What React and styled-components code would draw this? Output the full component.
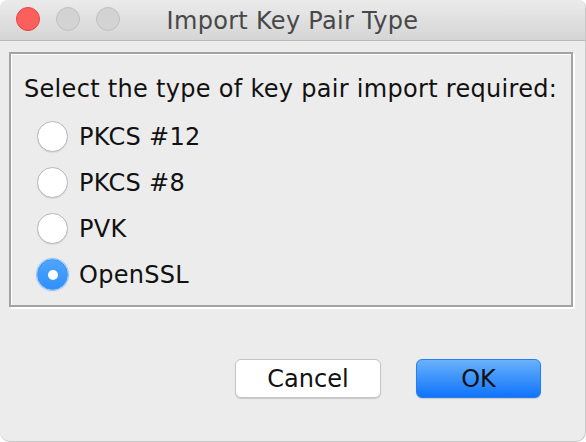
import React, { useState } from "react";
import styled, { createGlobalStyle } from "styled-components";

const GlobalStyle = createGlobalStyle`
  html, body {
    margin: 0;
    padding: 0;
    background: #ffffff;
  }
  * {
    box-sizing: border-box;
  }
`;

const options = ["PKCS #12", "PKCS #8", "PVK", "OpenSSL"];

function App() {
  const [selected, setSelected] = useState("OpenSSL");

  return (
    <>
      <GlobalStyle />
      <Window>
        <TitleBar>
          <Lights>
            <Light color="#fc605c" edge="#df4744" />
            <Light color="#d3d3d3" edge="#bfbfbf" />
            <Light color="#d3d3d3" edge="#bfbfbf" />
          </Lights>
          <Title>Import Key Pair Type</Title>
        </TitleBar>
        <Body>
          <Panel>
            <Prompt>Select the type of key pair import required:</Prompt>
            <RadioList>
              {options.map((opt) => (
                <RadioRow key={opt} onClick={() => setSelected(opt)}>
                  <RadioCircle checked={selected === opt} />
                  <RadioLabel>{opt}</RadioLabel>
                </RadioRow>
              ))}
            </RadioList>
          </Panel>
          <ButtonBar>
            <Button>Cancel</Button>
            <Button primary>OK</Button>
          </ButtonBar>
        </Body>
      </Window>
    </>
  );
}

const Window = styled.div`
  width: 586px;
  height: 442px;
  display: flex;
  flex-direction: column;
  background: #ececec;
  border-radius: 8px 8px 10px 10px;
  overflow: hidden;
  font-family: "DejaVu Sans", "Liberation Sans", sans-serif;
  border-right: 1px solid #c8c8c8;
  border-bottom: 1px solid #c8c8c8;
`;

const TitleBar = styled.div`
  position: relative;
  height: 41px;
  flex-shrink: 0;
  display: flex;
  align-items: center;
  justify-content: center;
  background: linear-gradient(#ebebeb, #d5d5d5);
  border-bottom: 1px solid #b9b9b9;
`;

const Lights = styled.div`
  position: absolute;
  left: 16px;
  top: 7px;
  display: flex;
  gap: 16px;
`;

const Light = styled.div`
  width: 24px;
  height: 24px;
  border-radius: 50%;
  background: ${(p) => p.color};
  border: 1px solid ${(p) => p.edge};
`;

const Title = styled.div`
  font-size: 24px;
  letter-spacing: 0.3px;
  color: #484848;
  margin-left: 0;
  margin-top: 1px;
`;

const Body = styled.div`
  flex: 1;
  display: flex;
  flex-direction: column;
  padding: 11px 12px 0 9px;
`;

const Panel = styled.div`
  height: 255px;
  border: 2px solid #a3a3a3;
  box-shadow: inset 1px 1px 0 #ffffff, 2px 2px 0 #ffffff;
  padding: 20px 0 0 13px;
`;

const Prompt = styled.div`
  font-size: 24px;
  letter-spacing: 0.3px;
  color: #111;
  line-height: 30px;
  white-space: nowrap;
`;

const RadioList = styled.div`
  display: flex;
  flex-direction: column;
  gap: 15px;
  margin: 17px 0 0 13px;
`;

const RadioRow = styled.div`
  display: flex;
  align-items: center;
  gap: 11px;
  height: 31px;
  cursor: default;
`;

const RadioCircle = styled.div`
  width: 31px;
  height: 31px;
  border-radius: 50%;
  flex-shrink: 0;
  display: flex;
  align-items: center;
  justify-content: center;
  background: ${(p) =>
    p.checked ? "linear-gradient(#4ea5fd, #2f8ffb)" : "#ffffff"};
  border: 1px solid ${(p) => (p.checked ? "#3a93f6" : "#b8b8b8")};
  box-shadow: ${(p) =>
    p.checked ? "0 0 1px 1px rgba(80,160,250,0.6)" : "0 1px 1px rgba(0,0,0,0.08)"};

  &::after {
    content: "";
    display: ${(p) => (p.checked ? "block" : "none")};
    width: 10px;
    height: 10px;
    border-radius: 50%;
    background: #ffffff;
  }
`;

const RadioLabel = styled.div`
  font-size: 24px;
  letter-spacing: 0.3px;
  color: #111;
`;

const ButtonBar = styled.div`
  display: flex;
  justify-content: flex-end;
  gap: 35px;
  padding: 52px 32px 0 0;
`;

const Button = styled.button`
  width: ${(p) => (p.primary ? "125px" : "146px")};
  height: 39px;
  border-radius: 6px;
  font-family: "DejaVu Sans", "Liberation Sans", sans-serif;
  font-size: 24px;
  color: #111;
  border: 1px solid ${(p) => (p.primary ? "#2a7df0" : "#c4c4c4")};
  background: ${(p) =>
    p.primary ? "linear-gradient(#69b1fa, #0f74fb)" : "#ffffff"};
  box-shadow: 0 1px 1px rgba(0, 0, 0, 0.15);
  padding: 0;
`;

export default App;
